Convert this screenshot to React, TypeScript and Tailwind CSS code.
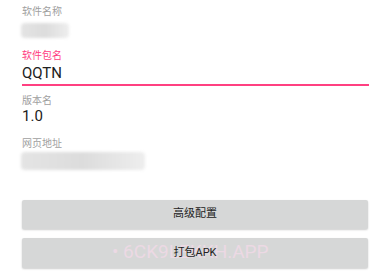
const cjk = { fontFamily: 'Roboto, "Noto Sans CJK SC", sans-serif' };

function Blur({ w, h }: { w: number; h: number }) {
  return (
    <div className="relative" style={{ width: w, height: h }}>
      <div className="absolute inset-0 bg-gradient-to-r from-[#e4e4e4] via-[#dcdcdc] to-[#eeeeee] blur-[1.5px] rounded-sm" />
    </div>
  );
}

export default function App() {
  return (
    <div className="w-[383px] h-[277px] bg-white overflow-hidden px-[22px]" style={cjk}>
      {/* name */}
      <div className="pt-[6px] text-[10px] leading-[12px] text-[#a0a0a0]">软件名称</div>
      <div className="mt-[5px] ml-[-1px]">
        <Blur w={48} h={15} />
      </div>

      {/* package */}
      <div className="mt-[12px] text-[10px] leading-[12px] text-[#ff4081]">软件包名</div>
      <div className="mt-[2px]">
        <div className="text-[15px] leading-[18px] text-[#212121] pb-[2px]">QQTN</div>
        <div className="h-[2px] w-[347px] bg-[#ff4081]" />
      </div>

      {/* version */}
      <div className="mt-[9px] text-[10px] leading-[12px] text-[#a0a0a0]">版本名</div>
      <div className="text-[15px] leading-[18px] text-[#212121]">1.0</div>

      {/* url */}
      <div className="mt-[13px] text-[10px] leading-[12px] text-[#a0a0a0]">网页地址</div>
      <div className="mt-[2px] ml-[-1px]">
        <Blur w={124} h={18} />
      </div>

      {/* buttons */}
      <div className="mt-[30px] flex flex-col gap-[9px] w-[346px]">
        <div className="h-[29px] rounded-[2px] bg-[#d6d7d7] shadow-[0_1px_2px_rgba(0,0,0,0.2)] flex items-center justify-center text-[11px] text-[#222]">
          高级配置
        </div>
        <div className="relative h-[30px] rounded-[2px] bg-[#d6d7d7] shadow-[0_1px_2px_rgba(0,0,0,0.2)] flex items-center justify-center text-[11px] text-[#222]">
          <span
            className="absolute left-[90px] top-[3px] text-[19px] leading-[22px] text-[#ecd9e4] whitespace-nowrap"
            style={{ fontFamily: 'Roboto, sans-serif' }}
          >
            • 6CK9LEKKH.APP
          </span>
          <span className="relative">打包APK</span>
        </div>
      </div>
    </div>
  );
}
